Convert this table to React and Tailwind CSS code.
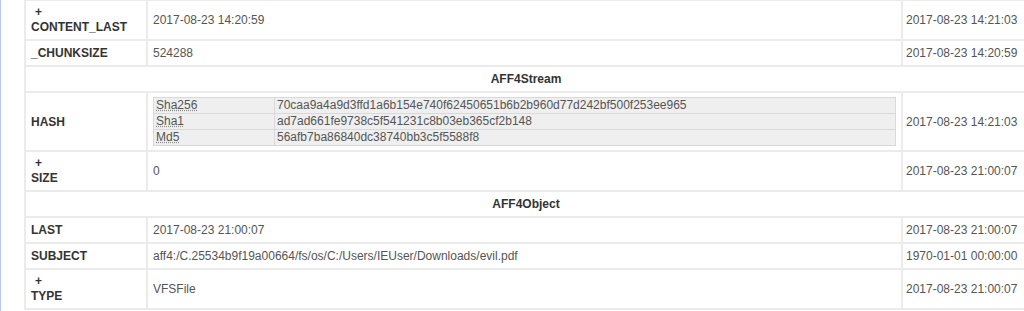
import React from "react";

const td = "border-2 border-[#ebebeb] px-[5px] py-[4px] align-middle";
const label = "font-bold text-[#333]";

function Label({ plus, children }) {
  return (
    <div className={label}>
      {plus && <div className="leading-[14px] pl-[4px]">+</div>}
      <div className="leading-[16px]">{children}</div>
    </div>
  );
}

function Row({ plus, name, value, age }) {
  return (
    <tr>
      <td className={td}>
        <Label plus={plus}>{name}</Label>
      </td>
      <td className={td}>{value}</td>
      <td className={td + " whitespace-nowrap pl-[3px]"}>{age}</td>
    </tr>
  );
}

function Header({ children }) {
  return (
    <tr>
      <td colSpan={3} className={td + " text-center font-bold text-[#333] py-[3px]"}>
        {children}
      </td>
    </tr>
  );
}

const hashes = [
  ["Sha256", "70caa9a4a9d3ffd1a6b154e740f62450651b6b2b960d77d242bf500f253ee965"],
  ["Sha1", "ad7ad661fe9738c5f541231c8b03eb365cf2b148"],
  ["Md5", "56afb7ba86840dc38740bb3c5f5588f8"],
];

export default function App() {
  return (
    <div className="flex w-[1024px] h-[311px] overflow-hidden bg-white font-['Liberation_Sans',Arial,sans-serif] text-[12px] leading-[16px] text-[#555]">
      <div className="w-px shrink-0 bg-[#b3c6f5]" />
      <div className="pl-[23px] -mt-[1px]">
        <table className="border-collapse table-fixed w-[1002px]">
          <colgroup>
            <col className="w-[122px]" />
            <col className="w-[755px]" />
            <col className="w-[125px]" />
          </colgroup>
          <tbody>
            <Row plus name="CONTENT_LAST" value="2017-08-23 14:20:59" age="2017-08-23 14:21:03" />
            <Row name="_CHUNKSIZE" value="524288" age="2017-08-23 14:20:59" />
            <Header>AFF4Stream</Header>
            <tr>
              <td className={td}>
                <Label>HASH</Label>
              </td>
              <td className={td}>
                <table className="w-full border-collapse table-fixed bg-[#efefef]">
                  <colgroup>
                    <col className="w-[121px]" />
                    <col />
                  </colgroup>
                  <tbody>
                    {hashes.map(([k, v]) => (
                      <tr key={k}>
                        <td className="border border-[#d9d9d9] px-[2px] leading-[15px]">
                          <abbr className="underline decoration-dotted decoration-[#888]">{k}</abbr>
                        </td>
                        <td className="border border-[#d9d9d9] px-[2px] leading-[15px]">{v}</td>
                      </tr>
                    ))}
                  </tbody>
                </table>
              </td>
              <td className={td + " whitespace-nowrap pl-[3px]"}>2017-08-23 14:21:03</td>
            </tr>
            <Row plus name="SIZE" value="0" age="2017-08-23 21:00:07" />
            <Header>AFF4Object</Header>
            <Row name="LAST" value="2017-08-23 21:00:07" age="2017-08-23 21:00:07" />
            <Row
              name="SUBJECT"
              value="aff4:/C.25534b9f19a00664/fs/os/C:/Users/IEUser/Downloads/evil.pdf"
              age="1970-01-01 00:00:00"
            />
            <Row plus name="TYPE" value="VFSFile" age="2017-08-23 21:00:07" />
          </tbody>
        </table>
      </div>
    </div>
  );
}
